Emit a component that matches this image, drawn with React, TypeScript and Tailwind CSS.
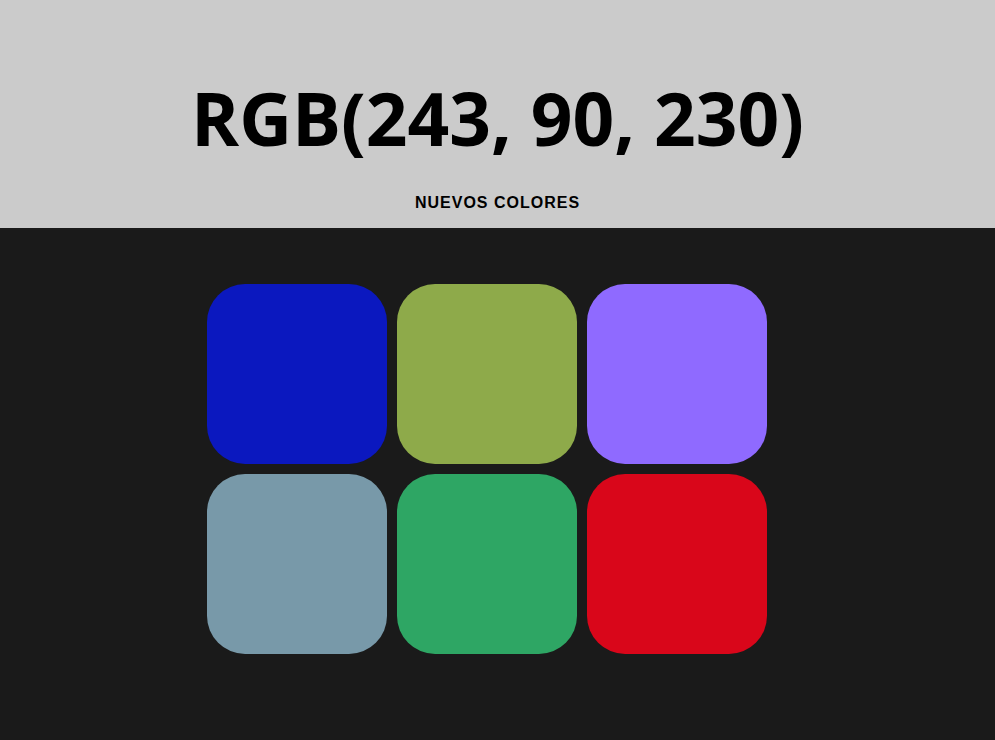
export default function App() {
  const colors = ["#0b18bf", "#8eaa4a", "#8f6aff", "#7899a9", "#2ea664", "#d9061a"];

  return (
    <div className="min-h-[740px] bg-[#1a1a1a]">
      <header className="flex h-[228px] flex-col items-center bg-[#cbcbcb] pt-[72px]">
        <h1 className="font-['Open_Sans',sans-serif] text-[73px] font-bold leading-[92px] text-black">
          RGB(243, 90, 230)
        </h1>
        <button className="mt-[29px] font-['Liberation_Sans',Arial,sans-serif] text-[16px] font-bold uppercase leading-[20px] tracking-[1px] text-black">
          Nuevos colores
        </button>
      </header>
      <main className="mx-auto w-[581px] pt-[56px]">
        <div className="grid w-[560px] grid-cols-3 gap-[10px]">
          {colors.map((c) => (
            <div
              key={c}
              className="h-[180px] w-[180px] rounded-[38px]"
              style={{ backgroundColor: c }}
            />
          ))}
        </div>
      </main>
    </div>
  );
}
